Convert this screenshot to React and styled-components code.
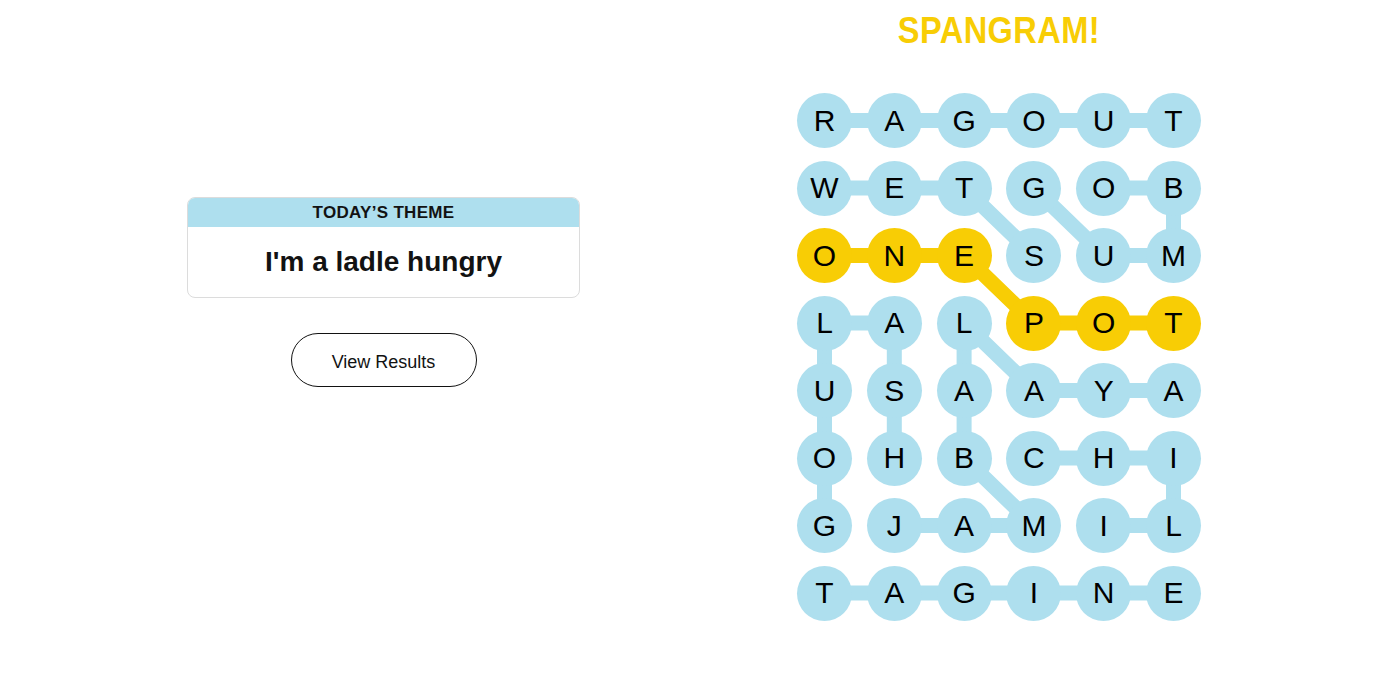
import React from "react";
import styled, { createGlobalStyle } from "styled-components";

const GlobalStyle = createGlobalStyle`
  html, body {
    margin: 0;
    padding: 0;
    background: #fff;
    font-family: "Liberation Sans", Arial, sans-serif;
    color: #121212;
  }
`;

const BLUE = "#aedfee";
const YELLOW = "#f8cd05";
const CELL = 55;
const COL_STEP = 69.8;
const ROW_STEP = 67.5;

const Page = styled.div`
  display: flex;
  height: 687px;
`;

const LeftPane = styled.div`
  flex: 0 0 767px;
  display: flex;
  flex-direction: column;
  align-items: center;
  padding-top: 197px;
  box-sizing: border-box;
`;

const RightPane = styled.div`
  flex: 0 0 464px;
  display: flex;
  flex-direction: column;
  align-items: center;
  padding-top: 12px;
  box-sizing: border-box;
`;

const ThemeCard = styled.div`
  width: 393px;
  border: 1px solid #dcdcdc;
  border-radius: 8px;
  overflow: hidden;
  box-sizing: border-box;
  text-align: center;
`;

const ThemeHeader = styled.div`
  background: ${BLUE};
  height: 29px;
  line-height: 30px;
  font-size: 17px;
  font-weight: 700;
  letter-spacing: 0.3px;
  text-transform: uppercase;
`;

const ThemeText = styled.div`
  padding: 18px 0 18px;
  font-size: 28px;
  line-height: 34px;
  font-weight: 700;
`;

const ResultsButton = styled.button`
  margin-top: 35px;
  width: 186px;
  height: 54px;
  padding: 5px 0 0;
  border: 1px solid #121212;
  border-radius: 27px;
  background: #fff;
  font-family: "Liberation Sans", Arial, sans-serif;
  font-size: 18px;
  color: #121212;
  cursor: pointer;
`;

const Spangram = styled.div`
  font-family: "Liberation Sans", Arial, sans-serif;
  font-size: 37px;
  line-height: 38px;
  font-weight: 700;
  letter-spacing: 0.5px;
  color: ${YELLOW};
  transform: scaleX(0.88);
`;

const Board = styled.div`
  position: relative;
  margin-top: 43px;
  display: grid;
  grid-template-columns: repeat(6, ${CELL}px);
  grid-auto-rows: ${CELL}px;
  column-gap: ${COL_STEP - CELL}px;
  row-gap: ${ROW_STEP - CELL}px;
`;

const Links = styled.svg`
  position: absolute;
  inset: 0;
  width: 100%;
  height: 100%;
  overflow: visible;
`;

const Letter = styled.div`
  position: relative;
  width: ${CELL}px;
  height: ${CELL}px;
  border-radius: 50%;
  background: ${(p) => (p.$spangram ? YELLOW : BLUE)};
  display: flex;
  align-items: center;
  justify-content: center;
  font-size: 30px;
  color: #000;
`;

const grid = [
  "RAGOUT",
  "WETGOB",
  "ONESUM",
  "LALPOT",
  "USAAYA",
  "OHBCHI",
  "GJAMIL",
  "TAGINE",
];

// paths through the board as [row, col] steps
const words = [
  { cells: [[0, 0], [0, 1], [0, 2], [0, 3], [0, 4], [0, 5]] },
  { cells: [[1, 0], [1, 1], [1, 2], [2, 3]] },
  { cells: [[1, 3], [2, 4], [2, 5], [1, 5], [1, 4]] },
  { cells: [[2, 0], [2, 1], [2, 2], [3, 3], [3, 4], [3, 5]], spangram: true },
  { cells: [[6, 0], [5, 0], [4, 0], [3, 0], [3, 1], [4, 1], [5, 1]] },
  { cells: [[6, 1], [6, 2], [6, 3], [5, 2], [4, 2], [3, 2], [4, 3], [4, 4], [4, 5]] },
  { cells: [[5, 3], [5, 4], [5, 5], [6, 5], [6, 4]] },
  { cells: [[7, 0], [7, 1], [7, 2], [7, 3], [7, 4], [7, 5]] },
];

const spangramCells = new Set(
  words.filter((w) => w.spangram).flatMap((w) => w.cells.map(([r, c]) => `${r}-${c}`))
);

const center = ([r, c]) => [c * COL_STEP + CELL / 2, r * ROW_STEP + CELL / 2];

const App = () => {
  return (
    <Page>
      <GlobalStyle />
      <LeftPane>
        <ThemeCard>
          <ThemeHeader>Today’s Theme</ThemeHeader>
          <ThemeText>I'm a ladle hungry</ThemeText>
        </ThemeCard>
        <ResultsButton>View Results</ResultsButton>
      </LeftPane>
      <RightPane>
        <Spangram>SPANGRAM!</Spangram>
        <Board>
          <Links>
            {words.map((w, i) => (
              <polyline
                key={i}
                points={w.cells.map((cell) => center(cell).join(",")).join(" ")}
                fill="none"
                stroke={w.spangram ? YELLOW : BLUE}
                strokeWidth="15"
              />
            ))}
          </Links>
          {grid.map((row, r) =>
            row.split("").map((ch, c) => (
              <Letter key={`${r}-${c}`} $spangram={spangramCells.has(`${r}-${c}`)}>
                {ch}
              </Letter>
            ))
          )}
        </Board>
      </RightPane>
    </Page>
  );
};

export default App;
